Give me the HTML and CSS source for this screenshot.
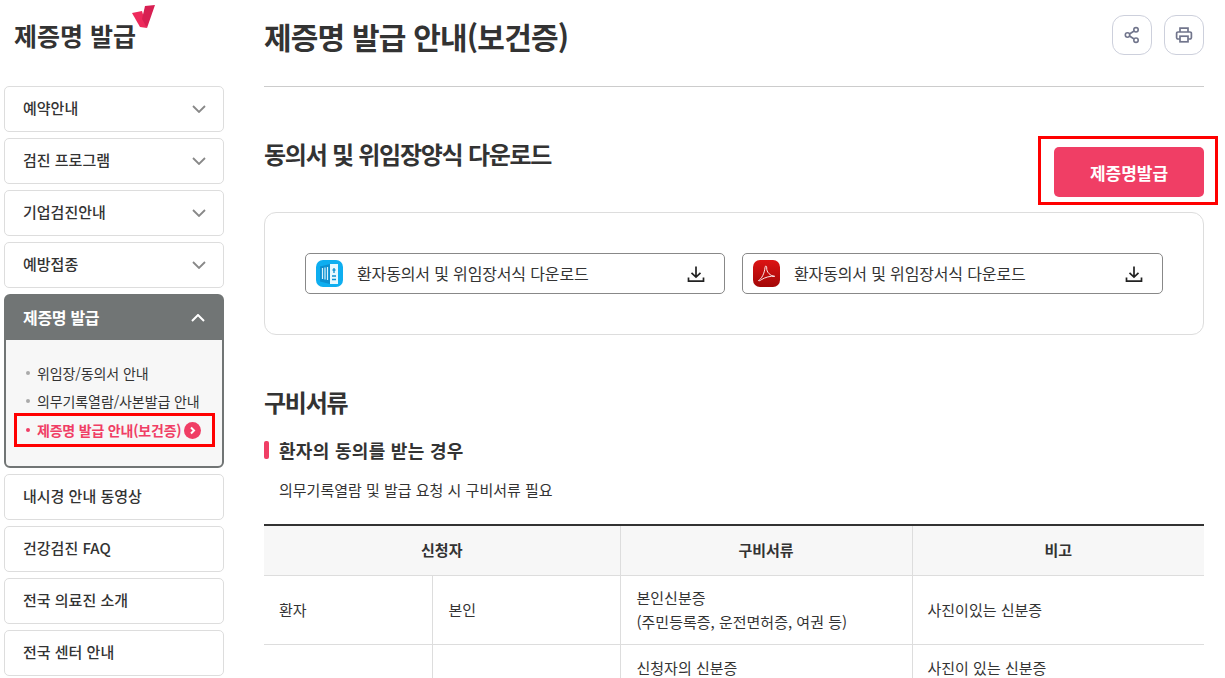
FILE: index.html
```html
<!DOCTYPE html>
<html lang="ko">

<head>
    <meta charset="UTF-8">
    <meta name="viewport" content="width=device-width, initial-scale=1.0">
    <title>제증명 발급 안내(보건증)</title>
    <link rel="stylesheet" href="styles.css">
</head>

<body>
    <div class="wrap">
        <aside class="sidebar">
            <div class="logo">
                <span>제증명 발급</span>
                <svg class="logo-check" width="24" height="24" viewBox="0 0 24 24">
                    <polygon points="0,8 10,6 15,23 8,22" fill="#ee2a5c" />
                    <polygon points="13,1 23,0 15,23 10,14" fill="#d81f52" />
                </svg>
            </div>
            <ul class="side-menu">
                <li class="side-item"><a>예약안내</a><svg class="chev" width="14" height="8" viewBox="0 0 14 8"><path d="M1 1l6 6 6-6" /></svg></li>
                <li class="side-item"><a>검진 프로그램</a><svg class="chev" width="14" height="8" viewBox="0 0 14 8"><path d="M1 1l6 6 6-6" /></svg></li>
                <li class="side-item"><a>기업검진안내</a><svg class="chev" width="14" height="8" viewBox="0 0 14 8"><path d="M1 1l6 6 6-6" /></svg></li>
                <li class="side-item"><a>예방접종</a><svg class="chev" width="14" height="8" viewBox="0 0 14 8"><path d="M1 1l6 6 6-6" /></svg></li>
                <li class="side-open">
                    <div class="side-open-head"><a>제증명 발급</a><svg class="chev up" width="14" height="8" viewBox="0 0 14 8"><path d="M1 7l6-6 6 6" /></svg></div>
                    <ul class="side-sub">
                        <li><a>위임장/동의서 안내</a></li>
                        <li><a>의무기록열람/사본발급 안내</a></li>
                        <li class="current">
                            <a>제증명 발급 안내(보건증)</a>
                            <svg class="go" width="17" height="17" viewBox="0 0 17 17"><circle cx="8.5" cy="8.5" r="8.5" fill="#f03e65" /><path d="M7 5.5l3 3-3 3" fill="none" stroke="#fff" stroke-width="2" /></svg>
                        </li>
                    </ul>
                </li>
                <li class="side-item"><a>내시경 안내 동영상</a></li>
                <li class="side-item"><a>건강검진 FAQ</a></li>
                <li class="side-item"><a>전국 의료진 소개</a></li>
                <li class="side-item"><a>전국 센터 안내</a></li>
            </ul>
        </aside>

        <main class="content">
            <header class="page-head">
                <h1>제증명 발급 안내(보건증)</h1>
                <div class="page-tools">
                    <button type="button" class="tool-btn">
                        <svg width="18" height="18" viewBox="0 0 18 18" fill="none" stroke="#71758c" stroke-width="1.6">
                            <circle cx="13" cy="3.8" r="2.2" />
                            <circle cx="4.5" cy="9" r="2.2" />
                            <circle cx="13" cy="14.2" r="2.2" />
                            <path d="M6.5 8l4.6-3M6.5 10l4.6 3" />
                        </svg>
                    </button>
                    <button type="button" class="tool-btn">
                        <svg width="18" height="18" viewBox="0 0 18 18" fill="none" stroke="#71758c" stroke-width="1.7">
                            <path d="M5 6V2.2h8V6" />
                            <path d="M5 13H3a1.4 1.4 0 0 1-1.4-1.4V7.4A1.4 1.4 0 0 1 3 6h12a1.4 1.4 0 0 1 1.4 1.4v4.2A1.4 1.4 0 0 1 15 13h-2" />
                            <rect x="5" y="10.2" width="8" height="5.6" />
                        </svg>
                    </button>
                </div>
            </header>

            <section class="download">
                <div class="download-head">
                    <h2>동의서 및 위임장양식 다운로드</h2>
                    <div class="mark-box">
                        <a class="issue-btn">제증명발급</a>
                    </div>
                </div>
                <div class="file-box">
                    <a class="file-btn">
                        <svg class="file-icon" width="27" height="27" viewBox="0 0 27 27">
                            <rect width="27" height="27" rx="7" fill="#0eaef0" />
                            <path d="M4 6.500l10-2.500v20l-10-2.500z" fill="#0b8fd0" />
                            <path d="M6.500 8v11M9 7.500v12M11.500 7v13" stroke="#d8f3fe" stroke-width="1.200" />
                            <path d="M14 4h8v20h-8z" fill="#e6f8ff" />
                            <path d="M16.500 10h3M18 8v5M16 16h4M16 19.500h4" stroke="#0b8fd0" stroke-width="1.300" fill="none" />
                        </svg>
                        <span>환자동의서 및 위임장서식 다운로드</span>
                        <svg class="down" width="18" height="18" viewBox="0 0 18 18" fill="none" stroke="#222" stroke-width="1.700">
                            <path d="M9 1.500V12M4.500 7.800L9 12l4.500-4.200M1.500 12.500v3.700h15v-3.700" />
                        </svg>
                    </a>
                    <a class="file-btn">
                        <svg class="file-icon" width="27" height="27" viewBox="0 0 27 27">
                            <defs>
                                <linearGradient id="pdfRed" x1="0" y1="0" x2="0" y2="1">
                                    <stop offset="0" stop-color="#dc1414" />
                                    <stop offset="1" stop-color="#a30606" />
                                </linearGradient>
                            </defs>
                            <rect width="27" height="27" rx="7" fill="url(#pdfRed)" />
                            <path d="M5.500 20.500c3-1.500 6-7 6.500-13 .1-2 1.800-2 1.700.5-.3 4 3.500 8 8 8.300-4-.5-10 1-13.500 3.500-1.200 1-2.700 1.300-2.700.7z" fill="none" stroke="#fff" stroke-width=".9" />
                        </svg>
                        <span>환자동의서 및 위임장서식 다운로드</span>
                        <svg class="down" width="18" height="18" viewBox="0 0 18 18" fill="none" stroke="#222" stroke-width="1.700">
                            <path d="M9 1.500V12M4.500 7.800L9 12l4.500-4.200M1.500 12.500v3.700h15v-3.700" />
                        </svg>
                    </a>
                </div>
            </section>

            <section class="docs">
                <h2>구비서류</h2>
                <h3>환자의 동의를 받는 경우</h3>
                <p class="docs-note">의무기록열람 및 발급 요청 시 구비서류 필요</p>
                <table class="docs-table">
                    <colgroup>
                        <col class="col-a">
                        <col class="col-b">
                        <col class="col-c">
                        <col>
                    </colgroup>
                    <thead>
                        <tr>
                            <th colspan="2">신청자</th>
                            <th>구비서류</th>
                            <th>비고</th>
                        </tr>
                    </thead>
                    <tbody>
                        <tr>
                            <td>환자</td>
                            <td>본인</td>
                            <td>본인신분증<br>(주민등록증, 운전면허증, 여권 등)</td>
                            <td>사진이있는 신분증</td>
                        </tr>
                        <tr class="row-short">
                            <td></td>
                            <td></td>
                            <td>신청자의 신분증</td>
                            <td>사진이 있는 신분증</td>
                        </tr>
                    </tbody>
                </table>
            </section>
        </main>
    </div>
</body>

</html>
```

FILE: styles.css
```css
:root {
    --pink: #f03e65;
    --ink: #333;
    --line: #ddd;
}

* {
    margin: 0;
    padding: 0;
    box-sizing: border-box;
}

ul li {
    list-style: none;
}

html,
body {
    height: 678px;
    overflow: hidden;
}

body {
    font-family: "Noto Sans CJK KR", "Noto Sans", sans-serif;
    color: var(--ink);
    background-color: #fff;
}

.wrap {
    display: flex;
    gap: 40px;
    width: 1200px;
    margin-left: 4px;
}

/* left menu */
.sidebar {
    width: 220px;
    flex-shrink: 0;
}

.logo {
    position: relative;
    height: 86px;
    padding: 14px 0 0 10px;
    font-size: 25px;
    line-height: 42px;
    font-weight: 700;
}

.logo-check {
    position: absolute;
    left: 128px;
    top: 5px;
}

.side-menu {
    display: flex;
    flex-direction: column;
    gap: 6px;
}

.side-item {
    display: flex;
    align-items: center;
    justify-content: space-between;
    height: 46px;
    padding: 0 17px 0 18px;
    border: 1px solid var(--line);
    border-radius: 5px;
    font-size: 15px;
    font-weight: 500;
}

.side-item a {
    padding-bottom: 3px;
}

.chev {
    fill: none;
    stroke: #888;
    stroke-width: 1.8;
}

.chev.up {
    stroke: #fff;
    stroke-width: 2;
}

.side-open {
    height: 174px;
    border: 2px solid #717575;
    border-radius: 6px;
    background-color: #f7f7f7;
}

.side-open-head {
    display: flex;
    align-items: center;
    justify-content: space-between;
    height: 44px;
    padding: 0 17px;
    background-color: #717575;
    color: #fff;
    font-size: 16px;
    letter-spacing: -0.3px;
    font-weight: 700;
}

.side-open-head a {
    padding-bottom: 3px;
}

.side-sub {
    padding-top: 19px;
    font-size: 14px;
    line-height: 28px;
    letter-spacing: -0.1px;
}

.side-sub li {
    display: flex;
    align-items: center;
    height: 28px;
    padding-left: 31px;
    position: relative;
}

.side-sub li::before {
    content: "";
    position: absolute;
    left: 20px;
    top: 12px;
    width: 4px;
    height: 4px;
    border-radius: 50%;
    background-color: #aaa;
}

.side-sub li.current {
    width: 201px;
    height: 34px;
    margin: -2px 0 0 8px;
    padding-left: 20px;
    border: 3px solid #f00;
    color: var(--pink);
    font-weight: 700;
    letter-spacing: -0.2px;
}

.side-sub li.current::before {
    left: 9px;
    top: 12px;
    background-color: var(--pink);
}

.go {
    margin-left: 3px;
}

/* content */
.content {
    flex: 1;
    min-width: 0;
}

.page-head {
    display: flex;
    justify-content: space-between;
    height: 87px;
    padding-top: 15px;
    border-bottom: 1px solid #ccc;
}

.page-head h1 {
    margin-top: -1px;
    font-size: 30px;
    line-height: 44px;
    letter-spacing: -0.8px;
    font-weight: 700;
}

.page-tools {
    display: flex;
    gap: 12px;
}

.tool-btn {
    display: flex;
    align-items: center;
    justify-content: center;
    width: 40px;
    height: 40px;
    border: 1px solid #cdd0dc;
    border-radius: 12px;
    background-color: #fff;
}

.download-head {
    display: flex;
    justify-content: space-between;
    align-items: flex-start;
    height: 125px;
    padding-top: 49px;
}

.download-head h2,
.docs h2 {
    margin-top: -1px;
    font-size: 24px;
    line-height: 38px;
    letter-spacing: -1.25px;
    font-weight: 700;
}

.mark-box {
    margin-right: -14px;
    padding: 8px 11px 5px 13px;
    border: 3px solid #f00;
}

.issue-btn {
    display: flex;
    align-items: center;
    justify-content: center;
    width: 150px;
    height: 50px;
    border-radius: 5px;
    background-color: var(--pink);
    color: #fff;
    font-size: 17px;
    font-weight: 700;
}

.file-box {
    display: flex;
    gap: 17px;
    height: 123px;
    padding: 40px;
    border: 1px solid var(--line);
    border-radius: 12px;
}

.file-btn {
    flex: 1;
    display: flex;
    align-items: center;
    height: 41px;
    padding: 0 19px 0 10px;
    border: 1px solid #888;
    border-radius: 5px;
    font-size: 16px;
    letter-spacing: -0.15px;
}

.file-btn:first-child {
    flex: 0 0 420px;
}

.file-btn span {
    flex: 1;
    margin-left: 14px;
    padding-bottom: 2px;
}

.docs {
    padding-top: 49px;
}

.docs h3 {
    position: relative;
    margin-top: 15px;
    padding-left: 15px;
    font-size: 18px;
    line-height: 28px;
    letter-spacing: 0.3px;
    font-weight: 700;
}

.docs h3::before {
    content: "";
    position: absolute;
    left: 0;
    top: 5px;
    width: 5px;
    height: 18px;
    border-radius: 2px;
    background-color: var(--pink);
}

.docs-note {
    margin-top: 14px;
    padding-left: 15px;
    font-size: 15px;
    line-height: 24px;
}

.docs-table {
    width: 100%;
    margin-top: 22px;
    border-collapse: collapse;
    border-top: 2px solid var(--ink);
    table-layout: fixed;
    font-size: 15px;
}

.col-a {
    width: 168px;
}

.col-b {
    width: 188px;
}

.col-c {
    width: 292px;
}

.docs-table th {
    height: 50px;
    padding-bottom: 2px;
    background-color: #f7f7f7;
    font-weight: 700;
    border-bottom: 1px solid var(--line);
    border-left: 1px solid var(--line);
}

.docs-table td {
    height: 69px;
    padding: 0 15px 0 16px;
    line-height: 24px;
    border-bottom: 1px solid var(--line);
    border-left: 1px solid var(--line);
}

.docs-table td:last-child {
    padding-left: 15px;
}

.docs-table .row-short td {
    height: 48px;
}

.docs-table th:first-child {
    border-left: none;
}

.docs-table td:first-child {
    padding-left: 15px;
    border-left: none;
}
```
